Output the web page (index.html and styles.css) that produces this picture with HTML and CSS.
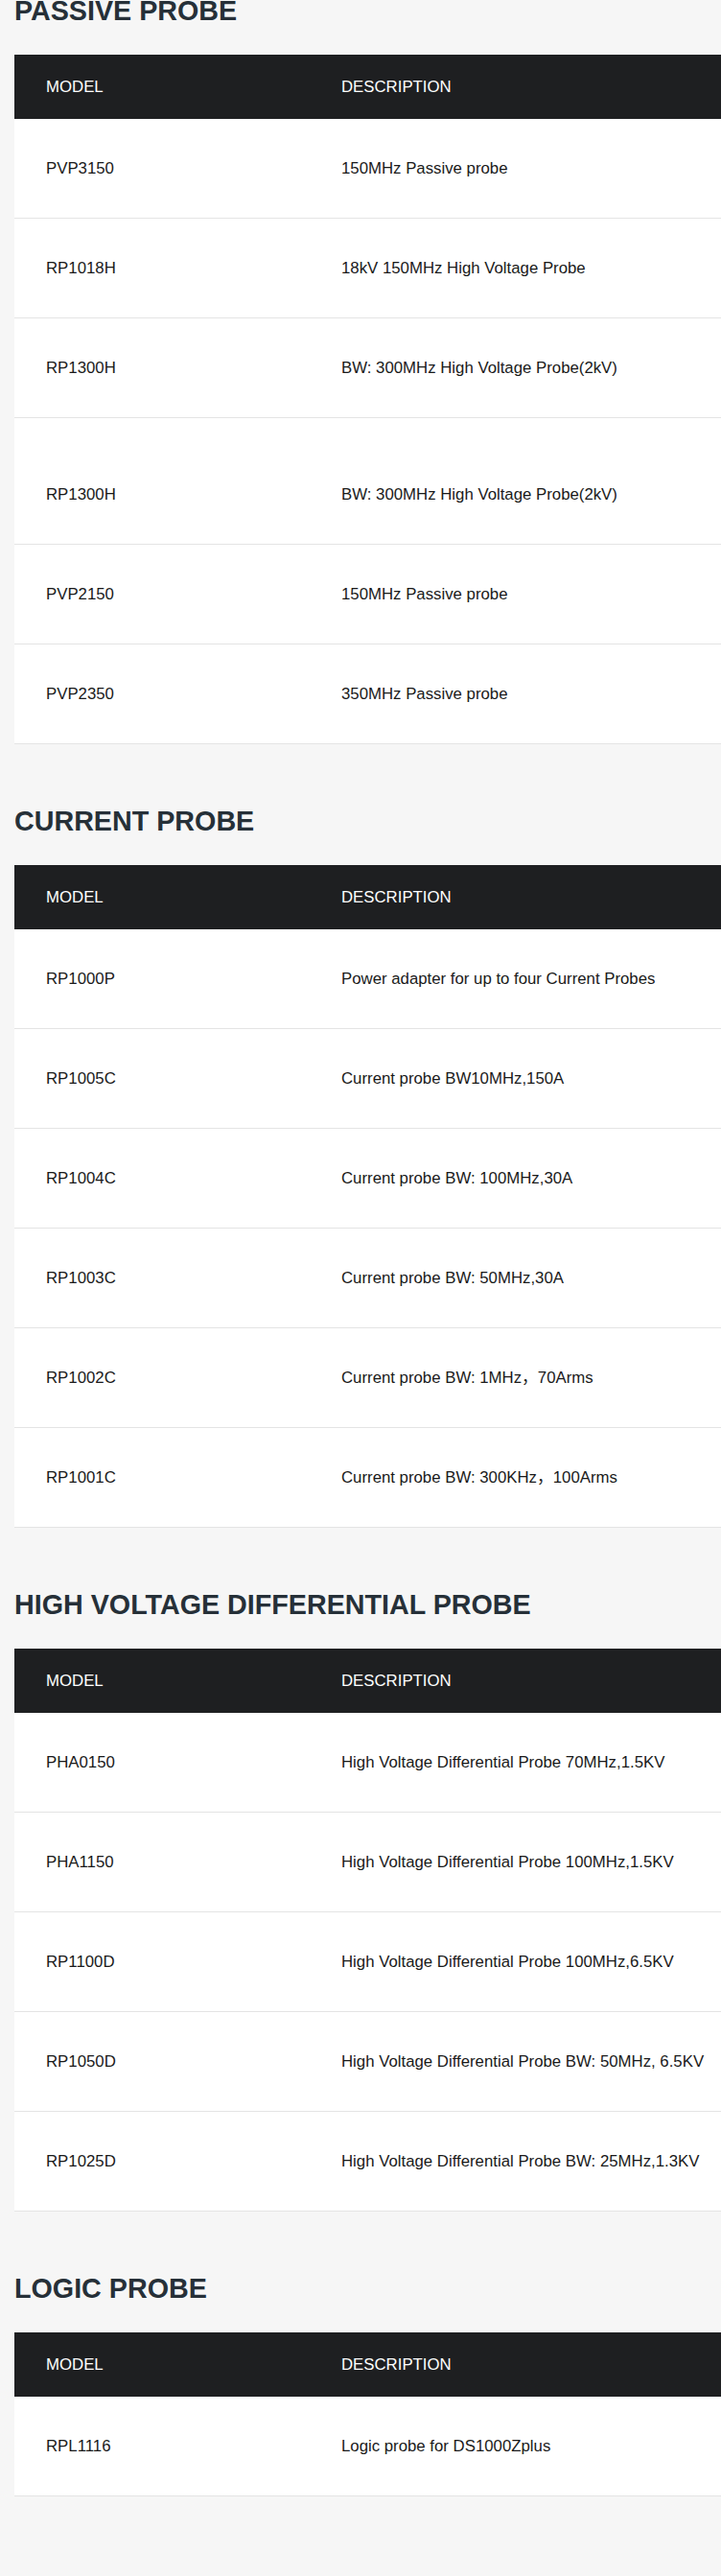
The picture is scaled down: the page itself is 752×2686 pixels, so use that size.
FILE: index.html
```html
<!DOCTYPE html>
<html>
<head>
<meta charset="utf-8">
<title>Probes</title>
<link rel="stylesheet" href="styles.css">
</head>
<body>
<div class="page">

	<div class="probe">
		<h2 class="probe-title">PASSIVE PROBE</h2>
		<table class="probe-table">
			<thead>
				<tr><th class="col-model">MODEL</th><th>DESCRIPTION</th></tr>
			</thead>
			<tbody>
				<tr><td>PVP3150</td><td>150MHz Passive probe</td></tr>
				<tr><td>RP1018H</td><td>18kV 150MHz High Voltage Probe</td></tr>
				<tr><td>RP1300H</td><td>BW: 300MHz High Voltage Probe(2kV)</td></tr>
				<tr class="tall"><td>RP1300H</td><td>BW: 300MHz High Voltage Probe(2kV)</td></tr>
				<tr><td>PVP2150</td><td>150MHz Passive probe</td></tr>
				<tr><td>PVP2350</td><td>350MHz Passive probe</td></tr>
			</tbody>
		</table>
	</div>

	<div class="probe">
		<h2 class="probe-title">CURRENT PROBE</h2>
		<table class="probe-table">
			<thead>
				<tr><th class="col-model">MODEL</th><th>DESCRIPTION</th></tr>
			</thead>
			<tbody>
				<tr><td>RP1000P</td><td>Power adapter for up to four Current Probes</td></tr>
				<tr><td>RP1005C</td><td>Current probe BW10MHz,150A</td></tr>
				<tr><td>RP1004C</td><td>Current probe BW: 100MHz,30A</td></tr>
				<tr><td>RP1003C</td><td>Current probe BW: 50MHz,30A</td></tr>
				<tr><td>RP1002C</td><td>Current probe BW: 1MHz，70Arms</td></tr>
				<tr><td>RP1001C</td><td>Current probe BW: 300KHz，100Arms</td></tr>
			</tbody>
		</table>
	</div>

	<div class="probe">
		<h2 class="probe-title">HIGH VOLTAGE DIFFERENTIAL PROBE</h2>
		<table class="probe-table">
			<thead>
				<tr><th class="col-model">MODEL</th><th>DESCRIPTION</th></tr>
			</thead>
			<tbody>
				<tr><td>PHA0150</td><td>High Voltage Differential Probe 70MHz,1.5KV</td></tr>
				<tr><td>PHA1150</td><td>High Voltage Differential Probe 100MHz,1.5KV</td></tr>
				<tr><td>RP1100D</td><td>High Voltage Differential Probe 100MHz,6.5KV</td></tr>
				<tr><td>RP1050D</td><td>High Voltage Differential Probe BW: 50MHz, 6.5KV</td></tr>
				<tr><td>RP1025D</td><td>High Voltage Differential Probe BW: 25MHz,1.3KV</td></tr>
			</tbody>
		</table>
	</div>

	<div class="probe">
		<h2 class="probe-title">LOGIC PROBE</h2>
		<table class="probe-table">
			<thead>
				<tr><th class="col-model">MODEL</th><th>DESCRIPTION</th></tr>
			</thead>
			<tbody>
				<tr><td>RPL1116</td><td>Logic probe for DS1000Zplus</td></tr>
			</tbody>
		</table>
	</div>

</div>
</body>
</html>
```

FILE: styles.css
```css
* {margin:0; padding:0; box-sizing:border-box;}
html, body {background:#f6f6f6;}
body {font-family:"Liberation Sans", Arial, "Noto Sans CJK SC", sans-serif; color:#1a1a1a;}

.page {padding:0 0 84px 15px;}

.probe {margin-bottom:69px;}
.probe:last-child {margin-bottom:0;}

.probe-title {font-size:28.7px; line-height:22px; font-weight:bold; color:#263038; margin-bottom:35px;}

.probe-table {width:100%; table-layout:fixed; border-collapse:collapse; background:#fff; font-size:16.8px;}
.probe-table th {background:#1e1f21; color:#fff; font-weight:normal; text-align:left; line-height:24px; padding:22px 0 21px 33px;}
.probe-table th.col-model {width:308px;}
.probe-table td {line-height:24px; padding:40px 0 39px 33px; border-bottom:1px solid #e4e4e4; vertical-align:top; white-space:nowrap;}
.probe-table tr.tall td {padding-top:68px;}
```
